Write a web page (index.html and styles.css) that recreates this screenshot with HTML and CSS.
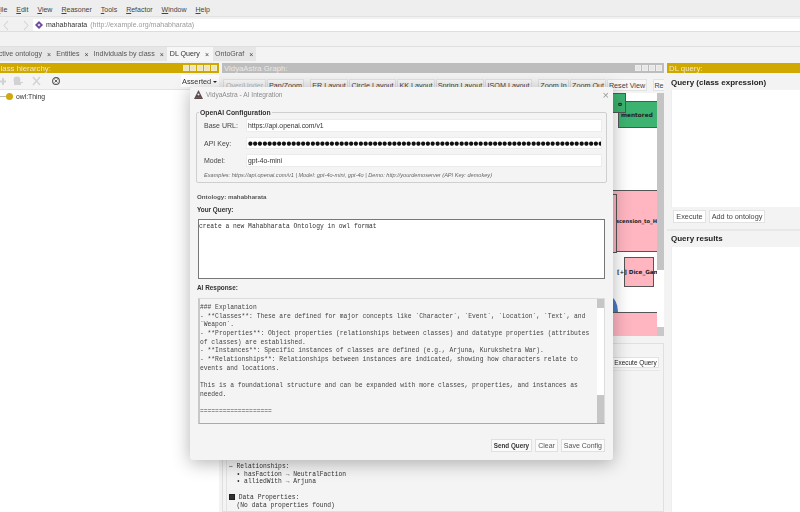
FILE: index.html
```html
<!DOCTYPE html>
<html lang="en">
<head>
<meta charset="utf-8">
<title>VidyaAstra - AI Integration</title>
<link rel="stylesheet" href="styles.css">
</head>
<body>
<div class="app">
  <nav class="menubar">
    <span><u>F</u>ile</span><span><u>E</u>dit</span><span><u>V</u>iew</span><span><u>R</u>easoner</span><span><u>T</u>ools</span><span><u>R</u>efactor</span><span><u>W</u>indow</span><span><u>H</u>elp</span>
  </nav>
  <div class="addressbar">
    <svg class="chev" width="28" height="12" viewBox="0 0 28 12"><path d="M6 2 2 6.500 6 11M22 2l4 4.500-4 4.500" fill="none" stroke="#cfcfcf" stroke-width="1"/></svg>
    <div class="address">
      <svg width="8" height="8" viewBox="0 0 8 8"><path d="M4 0 8 4 4 8 0 4Z" fill="#6a4a9c"/><circle cx="4" cy="4" r="1.300" fill="#d9cfe8"/></svg>
      <span>mahabharata</span><span class="muted">(http://example.org/mahabharata)</span>
    </div>
  </div>
  <div class="toolstrip"></div>
  <div class="tabs">
    <span class="tab first">Active ontology<i>×</i></span>
    <span class="tab">Entities<i>×</i></span>
    <span class="tab">Individuals by class<i>×</i></span>
    <span class="tab active">DL Query<i>×</i></span>
    <span class="tab">OntoGraf<i>×</i></span>
  </div>
  <main class="panes">
    <section class="pane left">
      <header class="viewhead gold"><span class="clip">Class hierarchy:</span>
        <span class="winbtns"><em></em><em></em><em></em><em></em><em></em></span>
      </header>
      <div class="hier-tools">
        <svg width="60" height="12" viewBox="0 0 60 12">
          <g fill="#d2d2d2"><rect x="2" y="3" width="2" height="7"/><rect x="0" y="5.500" width="6" height="2"/><circle cx="17" cy="5" r="3.400"/><rect x="14" y="7" width="7" height="3"/><rect x="20" y="7" width="3" height="1"/></g>
          <path d="M33 2l7 8M40 2l-7 8" stroke="#d2d2d2" stroke-width="1.400"/>
          <circle cx="56" cy="6" r="3.400" fill="none" stroke="#555" stroke-width="1.100"/><path d="M54.500 4.500l3 3M57.500 4.500l-3 3" stroke="#555" stroke-width=".9"/>
        </svg>
        <span class="asserted">Asserted <span class="caret"></span></span>
      </div>
      <div class="tree">
        <span class="tree-line"></span><span class="dot"></span><span>owl:Thing</span>
      </div>
    </section>
    <section class="pane center">
      <header class="viewhead grey"><span>VidyaAstra Graph:</span>
        <span class="winbtns"><em></em><em></em><em></em><em></em></span>
      </header>
      <div class="graph-tools">
        <span class="gbtn off w42">Over/Under</span><span class="gbtn w37">Pan/Zoom</span>
        <span class="gbtn w38 sep">ER Layout</span><span class="gbtn w47">Circle Layout</span><span class="gbtn w38">KK Layout</span><span class="gbtn w48">Spring Layout</span><span class="gbtn w47">ISOM Layout</span>
        <span class="gbtn w31 sep">Zoom In</span><span class="gbtn w36">Zoom Out</span><span class="gbtn w40">Reset View</span>
        <span class="gbtn w12 sep">Re</span>
      </div>
      <div class="canvas-row">
        <div class="canvas">
          <div class="node green n2">mentored</div>
          <div class="node green n1">o</div>
          <div class="node pink n3">ascension_to_H</div>
          <div class="node pink n6"></div>
          <div class="node pink n4"><span>[+] Dice_Gam</span></div>
          <div class="blue-arc"></div>
          <div class="node pink n5"></div>
        </div>
        <div class="vscroll"><div class="thumb"></div><div class="track"></div><div class="arrow"></div></div>
      </div>
      <div class="lower">
        <div class="lower-tools"><span class="gbtn exec">Execute Query</span></div>
        <pre class="output">⇔ Relationships:
  • hasFaction → NeutralFaction
  • alliedWith → Arjuna

<span class="dataicon"></span> Data Properties:
  (No data properties found)</pre>
      </div>
    </section>
    <section class="pane right">
      <header class="viewhead gold"><span>DL query:</span></header>
      <h2 class="qtitle">Query (class expression)</h2>
      <div class="qbox"></div>
      <div class="qbtns"><span class="gbtn q1">Execute</span><span class="gbtn q2">Add to ontology</span></div>
      <h2 class="qtitle results">Query results</h2>
      <div class="qbox fill"></div>
    </section>
  </main>

  <div class="dialog">
    <div class="dtitle">
      <svg width="9" height="9" viewBox="0 0 9 9"><path d="M4.500 0 6 3l3 6H0l3-6Z" fill="#5a4a4a"/><path d="M2 7h5v1H2z" fill="#c33"/><circle cx="4.500" cy="4.500" r="1" fill="#eee"/></svg>
      <span>VidyaAstra - AI Integration</span>
      <span class="close">×</span>
    </div>
    <fieldset class="config">
      <legend>OpenAI Configuration</legend>
      <label class="field"><span>Base URL:</span><span class="inp">https://api.openai.com/v1</span></label>
      <label class="field"><span>API Key:</span><span class="inp dots">●●●●●●●●●●●●●●●●●●●●●●●●●●●●●●●●●●●●●●●●●●●●●●●●●●●●●●●●●●●●●●●●●●●●●●●●●●●●●●●●●●●●●●●●●●</span></label>
      <label class="field"><span>Model:</span><span class="inp">gpt-4o-mini</span></label>
      <p class="hint">Examples: https://api.openai.com/v1 | Model: gpt-4o-mini, gpt-4o | Demo: http://yourdemoserver (API Key: demokey)</p>
    </fieldset>
    <p class="onto">Ontology: mahabharata</p>
    <p class="dlabel">Your Query:</p>
    <div class="query">create a new Mahabharata Ontology in owl format</div>
    <p class="dlabel resp">AI Response:</p>
    <div class="response">
      <pre>### Explanation
- **Classes**: These are defined for major concepts like `Character`, `Event`, `Location`, `Text`, and
`Weapon`.
- **Properties**: Object properties (relationships between classes) and datatype properties (attributes
of classes) are established.
- **Instances**: Specific instances of classes are defined (e.g., Arjuna, Kurukshetra War).
- **Relationships**: Relationships between instances are indicated, showing how characters relate to
events and locations.

This is a foundational structure and can be expanded with more classes, properties, and instances as
needed.

===================</pre>
      <div class="rscroll"><div class="rtop"></div><div class="rtrack"></div><div class="rthumb"></div></div>
    </div>
    <div class="dbtns"><span class="dbtn strong">Send Query</span><span class="dbtn">Clear</span><span class="dbtn">Save Config</span></div>
  </div>
</div>
</body>
</html>
```
FILE: styles.css
```css
* { box-sizing: border-box; }
html, body { margin: 0; padding: 0; }
body { width: 800px; height: 512px; overflow: hidden; background: #f3f3f3; font-family: "Liberation Sans", Arial, sans-serif; font-size: 7px; color: #444; }
.app { position: relative; width: 800px; height: 512px; overflow: hidden; display: flex; flex-direction: column; filter: blur(.4px); }

.menubar { height: 17px; display: flex; gap: 9px; align-items: center; margin-left: -4px; padding-top: 2px; background: #eeeeee; font-size: 7px; color: #444; border-bottom: 1px solid #e2e2e2; }
.addressbar { height: 15px; display: flex; align-items: center; gap: 3px; padding-left: 2px; background: #f1f1f1; border-bottom: 1px solid #dedede; }
.chev { flex: none; margin-top: 1px; }
.address { flex: 1; height: 12px; margin-top: 1px; background: #fff; display: flex; align-items: center; gap: 3px; padding-left: 2px; font-size: 7px; white-space: nowrap; color: #333; }
.muted { color: #9a9a9a; }
.toolstrip { height: 15px; background: #f2f2f2; border-bottom: 1px solid #dfdfdf; }
.tabs { height: 14px; display: flex; align-items: center; background: #f3f3f3; margin-left: -6px; font-size: 7.100px; color: #555; }
.tab { height: 14px; display: flex; align-items: center; gap: 5px; padding: 0 3px 0 2px; background: #e6e6e6; white-space: nowrap; }
.tab i { font-style: normal; font-size: 7px; color: #444; }
.tab.first { padding-left: 0; }
.tab.active { background: #f6f6f6; color: #333; padding: 0 4px 0 3px; }

.panes { flex: 1; min-height: 0; display: flex; gap: 3px; padding-top: 2px; }
.pane { display: flex; flex-direction: column; min-width: 0; }
.left { width: 219px; background: #fff; overflow: hidden; }
.center { width: 442px; overflow: hidden; }
.right { flex: 1; overflow: hidden; }
.viewhead { height: 10px; flex: none; display: flex; align-items: center; justify-content: space-between; padding-left: 2px; font-size: 7.800px; color: #f5eac2; white-space: nowrap; }
.gold { background: #cfa800; }
.grey { background: #bdbdbd; color: #e8e8e8; padding-left: 2px; }
.clip { margin-left: -7px; }
.winbtns { display: flex; gap: 1px; padding-right: 2px; }
.winbtns em { width: 6px; height: 6px; background: #f2f2f2; border: 1px solid rgba(255,255,255,.6); opacity: .8; }
.hier-tools { height: 17px; flex: none; display: flex; justify-content: space-between; align-items: center; background: #f4f4f4; border-bottom: 1px solid #e4e4e4; }
.asserted { height: 12px; width: 38px; display: flex; align-items: center; gap: 1px; padding-left: 1px; background: #fff; font-size: 7.400px; color: #333; white-space: nowrap; }
.caret { border: 2px solid transparent; border-top: 2.500px solid #222; margin-top: 3px; margin-left: 1px; }
.tree { display: flex; align-items: center; height: 12px; color: #333; font-size: 6.800px; }
.tree-line { width: 6px; height: 1px; background: #bbb; }
.dot { width: 7px; height: 7px; border-radius: 50%; background: #d0a90a; margin-right: 3px; }

.graph-tools { height: 20px; flex: none; display: flex; align-items: flex-start; padding: 6px 0 0 1px; gap: 1px; background: #f3f3f3; overflow: hidden; }
.gbtn { height: 12px; display: flex; align-items: center; justify-content: center; background: #f8f8f8; border: 1px solid #e2e2e2; font-size: 7.200px; color: #444; white-space: nowrap; flex: none; }
.gbtn.off { color: #bbb; }
.sep { margin-left: 5px; }
.w42 { width: 43px; } .w37 { width: 37px; } .w38 { width: 38px; } .w47 { width: 47px; } .w48 { width: 48px; } .w31 { width: 31px; } .w36 { width: 36px; } .w40 { width: 40px; } .w12 { width: 12px; }

.canvas-row { height: 243px; flex: none; display: flex; background: #fff; }
.canvas { position: relative; flex: 1; overflow: hidden; background: #fff; }
.node { position: absolute; border: 1px solid #555; display: flex; align-items: center; font-family: "DejaVu Sans", sans-serif; font-size: 6px; font-weight: bold; color: #222; white-space: nowrap; overflow: hidden; }
.green { background: #3cb371; }
.pink { background: #ffb6c1; }
.n1 { left: 370px; top: 0; width: 34px; height: 20px; justify-content: flex-end; padding-right: 3px; }
.n2 { left: 396px; top: 8px; width: 39px; height: 27px; border-right: 0; padding-left: 2px; font-size: 5.800px; }
.n3 { left: 350px; top: 97px; width: 85px; height: 62px; border-right: 0; justify-content: flex-end; font-size: 5.200px; }
.n6 { left: 340px; top: 101px; width: 55px; height: 59px; }
.n4 { left: 402px; top: 164px; width: 30px; height: 30px; overflow: visible; }
.n4 span { position: absolute; left: -8px; font-size: 5.600px; }
.n5 { left: 350px; top: 219px; width: 85px; height: 24px; border-right: 0; border-bottom: 0; }
.blue-arc { position: absolute; left: 380px; top: 204px; width: 16px; height: 30px; background: #4a7cc4; border-radius: 50%; }
.vscroll { width: 7px; flex: none; display: flex; flex-direction: column; }
.thumb { height: 177px; background: #c4c4c4; }
.track { flex: 1; background: #fff; }
.arrow { height: 9px; background: #c8c8c8; }

.lower { flex: 1; min-height: 0; margin-top: 7px; border: 1px solid #e0e0e0; background: #f4f4f4; display: flex; flex-direction: column; overflow: hidden; }
.lower-tools { height: 26px; flex: none; display: flex; justify-content: flex-end; align-items: center; padding: 10px 4px 0 0; }
.exec { width: 47px; height: 11px; background: #fff; font-size: 6.400px; color: #222; }
.output { margin: 0 3px; padding: 92px 0 0 2px; flex: 1; border-left: 1px solid #e2e2e2; border-top: 1px solid #e8e8e8; font-family: "Liberation Mono", monospace; font-size: 6.300px; line-height: 7.700px; color: #333; }
.dataicon { display: inline-block; width: 6px; height: 6px; vertical-align: -1px; background: #333; border: 1px solid #222; }

.qtitle { margin: 4px 0 0 4px; height: 13px; padding-bottom: 2px; flex: none; font-size: 8px; font-weight: bold; color: #222; display: flex; align-items: center; }
.qbox { margin: 0 0 0 4px; height: 117px; flex: none; background: #fff; border-left: 1px solid #eee; }
.qbox.fill { flex: 1; height: auto; }
.qbtns { height: 24px; flex: none; display: flex; gap: 3px; padding: 3px 0 0 6px; border-bottom: 2px solid #e8e8e8; }
.q1 { width: 33px; height: 13px; background: #fff; font-size: 7.300px; }
.q2 { width: 56px; height: 13px; background: #fff; font-size: 7.300px; }
.results { margin-top: 1px; height: 15px; }

.dialog { position: absolute; z-index: 5; left: 190px; top: 87px; width: 423px; height: 373px; background: #f4f4f4; border-radius: 3px; box-shadow: 0 3px 18px rgba(0,0,0,.3); padding: 0 6px; display: flex; flex-direction: column; }
.dtitle { height: 15px; flex: none; display: flex; align-items: center; gap: 3px; margin: 0 -2px; color: #8c8c8c; font-size: 6.600px; }
.close { margin-left: auto; font-size: 11px; color: #999; }
.config { margin: 7px 0 0; height: 74px; border: 1px solid #cfcfcf; border-radius: 2px; padding: 3px 4px 0 7px; min-width: 0; }
.config legend { padding: 0 1px; margin-left: -5px; font-size: 6.800px; font-weight: bold; color: #333; }
.field { display: flex; align-items: center; height: 13px; margin-bottom: 4.500px; font-size: 7px; color: #444; }
.field > span:first-child { width: 42px; flex: none; }
.inp { flex: 1; min-width: 0; height: 12.500px; background: #fff; border: 1px solid #ececec; padding-left: 1px; color: #333; font-size: 6.800px; display: flex; align-items: center; overflow: hidden; white-space: nowrap; }
.dots { font-family: "DejaVu Sans", sans-serif; font-size: 5.500px; color: #111; }
.hint { margin: 0; font-size: 5.600px; font-style: italic; color: #666; white-space: nowrap; }
.onto { margin: 10px 0 0 1px; height: 9px; font-size: 6.200px; font-weight: bold; color: #555; }
.dlabel { margin: 4px 0 3px 1px; height: 9px; font-size: 6.400px; font-weight: bold; color: #333; }
.query { margin: 1px 2px 0 2px; height: 60px; background: #fff; border: 1px solid #777; padding: 3px 0; font-family: "Liberation Mono", monospace; font-size: 6.300px; line-height: 8px; color: #333; }
.resp { margin-top: 5px; margin-bottom: 5px; }
.response { position: relative; margin: 0 2px; height: 126px; flex: none; background: #f4f4f4; border: 1px solid #dcdcdc; border-left: 2px solid #c8c8c8; border-bottom: 1px solid #aaa; overflow: hidden; }
.response pre { margin: 0; padding: 5px 0 0 0; font-family: "Liberation Mono", monospace; font-size: 6.300px; line-height: 8.670px; color: #444; }
.rscroll { position: absolute; right: 0; top: 0; bottom: 0; width: 7px; display: flex; flex-direction: column; }
.rtop { height: 9px; background: #c6c6c6; }
.rtrack { flex: 1; background: #fff; }
.rthumb { height: 28px; background: #c6c6c6; }
.dbtns { display: flex; justify-content: flex-end; gap: 3px; margin-top: 15px; padding-right: 2px; }
.dbtn { height: 13px; padding: 0 2px; display: flex; align-items: center; background: #fbfbfb; border: 1px solid #e0e0e0; font-size: 7px; color: #555; }
.strong { font-weight: bold; color: #333; font-size: 6.300px; }
```
